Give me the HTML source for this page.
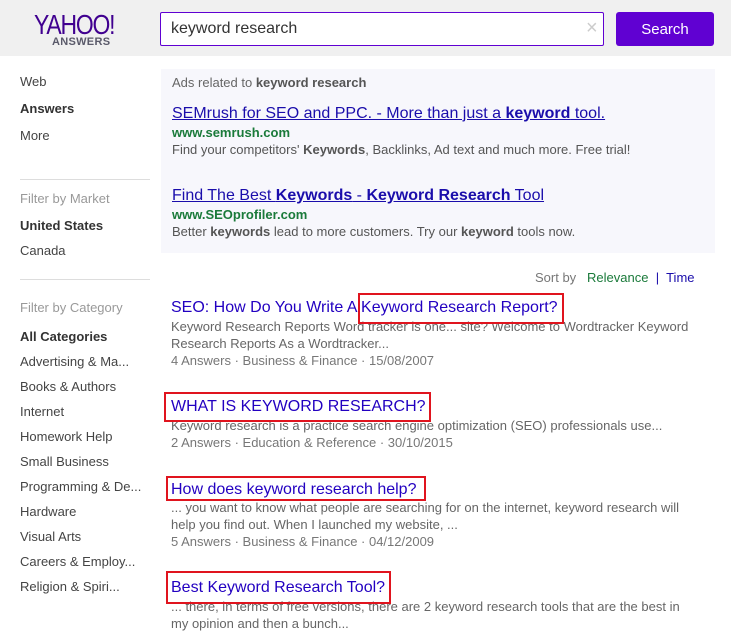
<!DOCTYPE html>
<html><head><meta charset="utf-8"><style>
body{margin:0;width:731px;height:634px;overflow:hidden;background:#fff;font-family:"Liberation Sans",Arial,sans-serif;position:relative}
.a{position:absolute;white-space:nowrap}
.hdr{position:absolute;left:0;top:0;width:731px;height:56px;background:#f0f0f0}
.nav{font-size:13px;color:#444}
.gray{color:#999}
.t{font-size:16px;color:#2200c1}
.s{font-size:13px;color:#666}
.m{font-size:13px;color:#777}
.rb{position:absolute;border:2px solid #e0141e;box-sizing:border-box}
</style></head><body>
<div class="hdr"></div>
<div class="a" style="left:34px;top:11px;font-size:28px;line-height:28px;color:#400090;letter-spacing:-1.5px;transform:scaleX(0.82);transform-origin:left">YAHOO!</div>
<div class="a" style="left:52px;top:36px;font-size:11px;font-weight:bold;color:#5a5a6a;letter-spacing:0.3px">ANSWERS</div>
<div class="a" style="left:160px;top:12px;width:444px;height:34px;box-sizing:border-box;border:1px solid #6001d2;background:#fff;border-radius:2px"></div>
<div class="a" style="left:171px;top:20px;font-size:16px;color:#333">keyword research</div>
<div class="a" style="left:586px;top:17px;font-size:20px;color:#ccc">×</div>
<div class="a" style="left:616px;top:12px;width:98px;height:34px;background:#6001d2;border-radius:3px;color:#fff;font-size:15px;text-align:center;line-height:36px">Search</div>

<div class="a nav" style="left:20px;top:74px">Web</div>
<div class="a nav" style="left:20px;top:101px;font-weight:bold;color:#333">Answers</div>
<div class="a nav" style="left:20px;top:128px">More</div>
<div class="a" style="left:20px;top:179px;width:130px;height:1px;background:#ddd"></div>
<div class="a nav gray" style="left:20px;top:191px">Filter by Market</div>
<div class="a nav" style="left:20px;top:218px;font-weight:bold;color:#333">United States</div>
<div class="a nav" style="left:20px;top:243px">Canada</div>
<div class="a" style="left:20px;top:279px;width:130px;height:1px;background:#ddd"></div>
<div class="a nav gray" style="left:20px;top:300px">Filter by Category</div>
<div class="a nav" style="left:20px;top:329px;font-weight:bold;color:#333">All Categories</div>
<div class="a nav" style="left:20px;top:354px">Advertising &amp; Ma...</div>
<div class="a nav" style="left:20px;top:379px">Books &amp; Authors</div>
<div class="a nav" style="left:20px;top:404px">Internet</div>
<div class="a nav" style="left:20px;top:429px">Homework Help</div>
<div class="a nav" style="left:20px;top:454px">Small Business</div>
<div class="a nav" style="left:20px;top:479px">Programming &amp; De...</div>
<div class="a nav" style="left:20px;top:504px">Hardware</div>
<div class="a nav" style="left:20px;top:529px">Visual Arts</div>
<div class="a nav" style="left:20px;top:554px">Careers &amp; Employ...</div>
<div class="a nav" style="left:20px;top:579px">Religion &amp; Spiri...</div>

<div class="a" style="left:161px;top:69px;width:554px;height:184px;background:#f7f7fc"></div>
<div class="a s" style="left:172px;top:75px">Ads related to <b style="color:#555">keyword research</b></div>
<div class="a t" style="left:172px;top:105px;text-decoration:underline;color:#1a0dab">SEMrush for SEO and PPC. - More than just a <b>keyword</b> tool.</div>
<div class="a" style="left:172px;top:125px;font-size:13px;font-weight:bold;color:#1a7a3a">www.semrush.com</div>
<div class="a s" style="left:172px;top:142px;color:#555">Find your competitors' <b>Keywords</b>, Backlinks, Ad text and much more. Free trial!</div>
<div class="a t" style="left:172px;top:187px;text-decoration:underline;color:#1a0dab">Find The Best <b>Keywords</b> - <b>Keyword Research</b> Tool</div>
<div class="a" style="left:172px;top:207px;font-size:13px;font-weight:bold;color:#1a7a3a">www.SEOprofiler.com</div>
<div class="a s" style="left:172px;top:224px;color:#555">Better <b>keywords</b> lead to more customers. Try our <b>keyword</b> tools now.</div>

<div class="a" style="left:535px;top:270px;font-size:13px;color:#777">Sort by &nbsp;&nbsp;<span style="color:#1a7a3a">Relevance</span> &nbsp;<span style="color:#1a0dab">|</span>&nbsp; <span style="color:#1a0dab">Time</span></div>

<div class="a t" style="left:171px;top:299px">SEO: How Do You Write A Keyword Research Report?</div>
<div class="a s" style="left:171px;top:319px">Keyword Research Reports Word tracker is one... site? Welcome to Wordtracker Keyword</div>
<div class="a s" style="left:171px;top:336px">Research Reports As a Wordtracker...</div>
<div class="a m" style="left:171px;top:353px">4 Answers · Business &amp; Finance · 15/08/2007</div>
<div class="rb" style="left:358px;top:293px;width:206px;height:31px"></div>

<div class="a t" style="left:171px;top:398px">WHAT IS KEYWORD RESEARCH?</div>
<div class="a s" style="left:171px;top:418px">Keyword research is a practice search engine optimization (SEO) professionals use...</div>
<div class="a m" style="left:171px;top:435px">2 Answers · Education &amp; Reference · 30/10/2015</div>
<div class="rb" style="left:164px;top:392px;width:267px;height:30px"></div>

<div class="a t" style="left:171px;top:481px">How does keyword research help?</div>
<div class="a s" style="left:171px;top:500px">... you want to know what people are searching for on the internet, keyword research will</div>
<div class="a s" style="left:171px;top:517px">help you find out. When I launched my website, ...</div>
<div class="a m" style="left:171px;top:534px">5 Answers · Business &amp; Finance · 04/12/2009</div>
<div class="rb" style="left:166px;top:476px;width:260px;height:25px"></div>

<div class="a t" style="left:171px;top:579px">Best Keyword Research Tool?</div>
<div class="a s" style="left:171px;top:599px">... there, in terms of free versions, there are 2 keyword research tools that are the best in</div>
<div class="a s" style="left:171px;top:616px">my opinion and then a bunch...</div>
<div class="rb" style="left:166px;top:571px;width:225px;height:33px"></div>
</body></html>
